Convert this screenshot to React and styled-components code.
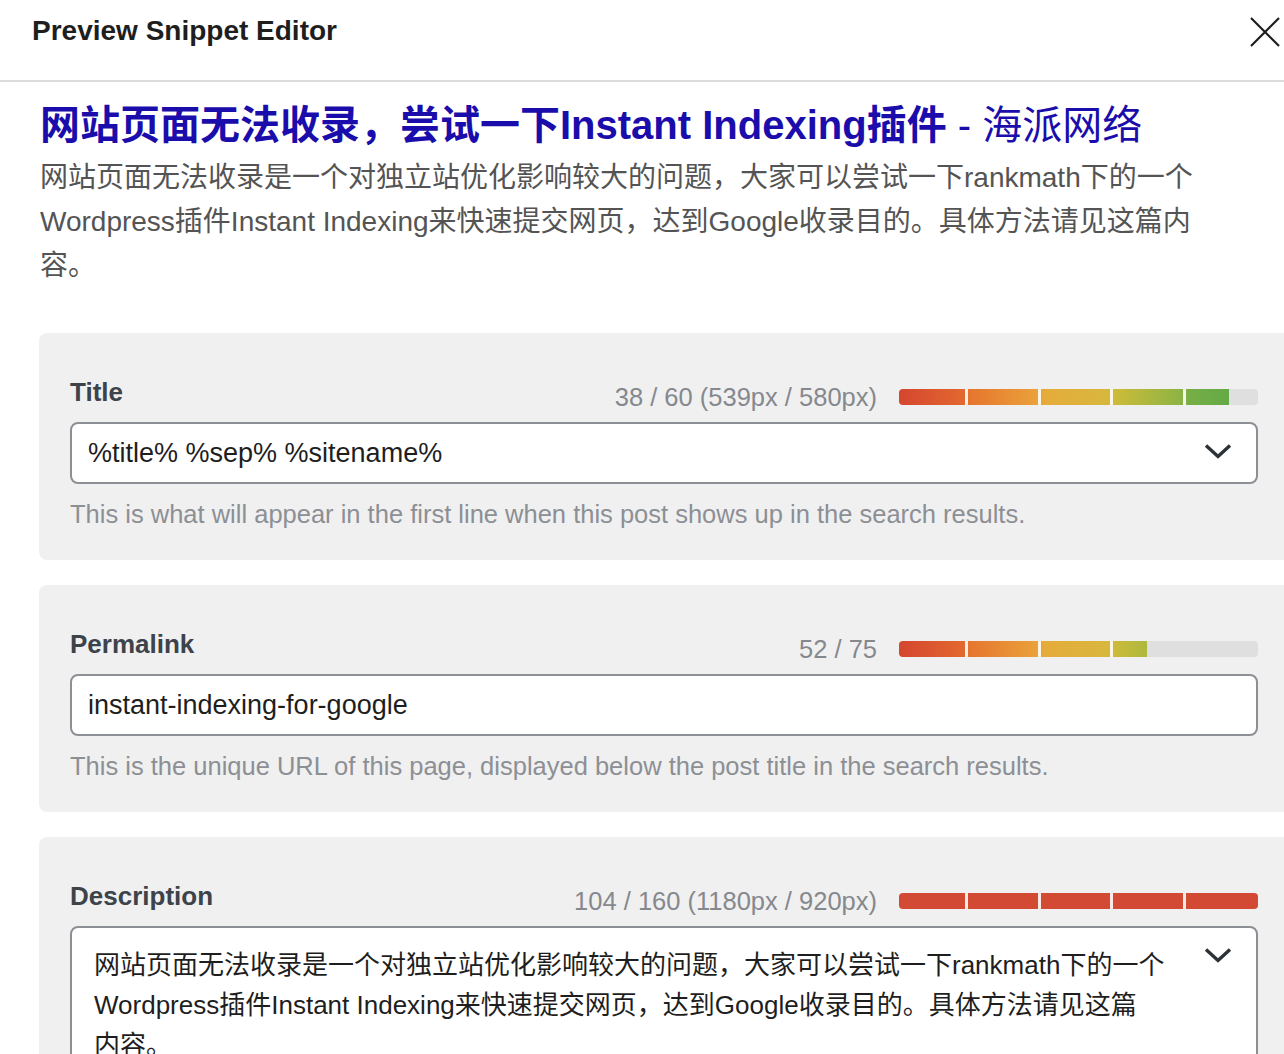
import React from "react";
import styled, { createGlobalStyle } from "styled-components";

const BAR_W = 359;

const GlobalStyle = createGlobalStyle`
	body {
		margin: 0;
		background: #fff;
		overflow: hidden;
		font-family: "Liberation Sans", "Noto Sans CJK SC", sans-serif;
	}
`;

const Modal = styled.div`
	width: 1284px;
	height: 1054px;
	overflow: hidden;
	background: #fff;
`;

const Header = styled.header`
	height: 82px;
	box-sizing: border-box;
	border-bottom: 2px solid #dcdcde;
	display: flex;
	align-items: flex-start;
	justify-content: space-between;
	padding: 14px 3px 0 32px;
	.heading {
		margin: 0;
		font-size: 28px;
		line-height: 34px;
		font-weight: 700;
		color: #1e1e1e;
	}
	.close {
		border: 0;
		background: none;
		padding: 0;
		margin-top: 2px;
		width: 32px;
		height: 32px;
		color: #1e1e1e;
	}
`;

const Body = styled.div`
	padding: 18px 0 0 39px;
`;

const Snippet = styled.div`
	padding-left: 1px;
	margin-bottom: 45px;
	.link {
		font-size: 40px;
		line-height: 50px;
		font-weight: 700;
		color: #1a0dab;
		white-space: nowrap;
		span {
			font-weight: 400;
		}
	}
	.desc {
		margin-top: 6px;
		font-size: 28px;
		line-height: 44px;
		color: #545454;
	}
`;

const Line = styled.span`
	display: block;
	white-space: nowrap;
`;

const Panel = styled.section`
	width: 1250px;
	box-sizing: border-box;
	background: #f0f0f1;
	border-radius: 8px 0 0 8px;
	padding: 49px 31px 31px 31px;
	margin-bottom: 25px;
`;

const PanelHead = styled.div`
	display: flex;
	align-items: center;
	height: 30px;
`;

const Label = styled.div`
	flex: 1;
	font-size: 26px;
	line-height: 30px;
	font-weight: 700;
	color: #3c434a;
	margin-bottom: 10px;
`;

const Counter = styled.div`
	font-size: 25.5px;
	line-height: 30px;
	color: #85888d;
	margin-right: 22px;
	white-space: nowrap;
`;

const Bar = styled.div`
	flex: none;
	width: ${BAR_W}px;
	height: 16px;
	border-radius: 4px;
	background: #dfdfdf;
	overflow: hidden;
`;

const Fill = styled.div`
	position: relative;
	height: 100%;
	overflow: hidden;
	background: ${(p) =>
		p.$over
			? "#d24a34"
			: "linear-gradient(to right, #d5462f 0%, #e2682f 18%, #e6772f 20%, #eaa03a 38%, #e5ac3b 41%, #d8b73e 58%, #c9bb3a 61%, #8fb444 78%, #76ae46 81%, #56a646 100%)"};
	background-size: ${BAR_W}px 100%;
`;

const Tick = styled.span`
	position: absolute;
	top: 0;
	bottom: 0;
	width: 3px;
	background: rgba(255, 255, 255, 0.88);
`;

const Field = styled.div`
	margin-top: 10px;
	height: 62px;
	box-sizing: border-box;
	border: 2px solid #8c8f94;
	border-radius: 8px;
	background: #fff;
	padding: 0 24px 0 16px;
	display: flex;
	align-items: center;
	font-size: 27px;
	color: #1e1e1e;
	.value {
		flex: 1;
	}
	svg {
		margin-top: -4px;
	}
`;

const TextArea = styled.div`
	margin-top: 10px;
	min-height: 220px;
	box-sizing: border-box;
	border: 2px solid #8c8f94;
	border-radius: 8px;
	background: #fff;
	padding: 17px 24px 20px 22px;
	display: flex;
	align-items: flex-start;
	font-size: 26px;
	line-height: 40px;
	color: #1e1e1e;
	.value {
		flex: 1;
	}
	svg {
		margin-top: 2px;
	}
`;

const Help = styled.p`
	margin: 15px 0 0;
	font-size: 25.5px;
	line-height: 30px;
	color: #8c8f94;
`;

const ticks = [66, 139, 211, 284];

function LengthBar({ pct, over }) {
	return (
		<Bar>
			<Fill $over={over} style={{ width: `${pct}%` }}>
				{ticks.map((t) => (
					<Tick key={t} style={{ left: t }} />
				))}
			</Fill>
		</Bar>
	);
}

function Chevron() {
	return (
		<svg width="28" height="16" viewBox="0 0 28 16" fill="none">
			<path d="M2 2.5 L14 13.5 L26 2.5" stroke="#2c3338" strokeWidth="3.4" />
		</svg>
	);
}

function CloseIcon() {
	return (
		<svg width="32" height="32" viewBox="0 0 32 32">
			<path d="M2 2 L30 30 M30 2 L2 30" stroke="currentColor" strokeWidth="2.2" />
		</svg>
	);
}

const descLines = [
	"网站页面无法收录是一个对独立站优化影响较大的问题，大家可以尝试一下rankmath下的一个",
	"Wordpress插件Instant Indexing来快速提交网页，达到Google收录目的。具体方法请见这篇内",
	"容。",
];

const fieldLines = [
	"网站页面无法收录是一个对独立站优化影响较大的问题，大家可以尝试一下rankmath下的一个",
	"Wordpress插件Instant Indexing来快速提交网页，达到Google收录目的。具体方法请见这篇",
	"内容。",
];

export default function App() {
	return (
		<>
			<GlobalStyle />
			<Modal>
				<Header>
					<h1 className="heading">Preview Snippet Editor</h1>
					<button className="close" aria-label="Close">
						<CloseIcon />
					</button>
				</Header>
				<Body>
					<Snippet>
						<div className="link">
							网站页面无法收录，尝试一下Instant Indexing插件<span> - 海派网络</span>
						</div>
						<div className="desc">
							{descLines.map((l) => (
								<Line key={l}>{l}</Line>
							))}
						</div>
					</Snippet>

					<Panel>
						<PanelHead>
							<Label>Title</Label>
							<Counter>38 / 60 (539px / 580px)</Counter>
							<LengthBar pct={92} />
						</PanelHead>
						<Field>
							<span className="value">%title% %sep% %sitename%</span>
							<Chevron />
						</Field>
						<Help>This is what will appear in the first line when this post shows up in the search results.</Help>
					</Panel>

					<Panel>
						<PanelHead>
							<Label>Permalink</Label>
							<Counter>52 / 75</Counter>
							<LengthBar pct={69} />
						</PanelHead>
						<Field>
							<span className="value">instant-indexing-for-google</span>
						</Field>
						<Help>This is the unique URL of this page, displayed below the post title in the search results.</Help>
					</Panel>

					<Panel>
						<PanelHead>
							<Label>Description</Label>
							<Counter>104 / 160 (1180px / 920px)</Counter>
							<LengthBar pct={100} over />
						</PanelHead>
						<TextArea>
							<div className="value">
								{fieldLines.map((l) => (
									<Line key={l}>{l}</Line>
								))}
							</div>
							<Chevron />
						</TextArea>
					</Panel>
				</Body>
			</Modal>
		</>
	);
}
